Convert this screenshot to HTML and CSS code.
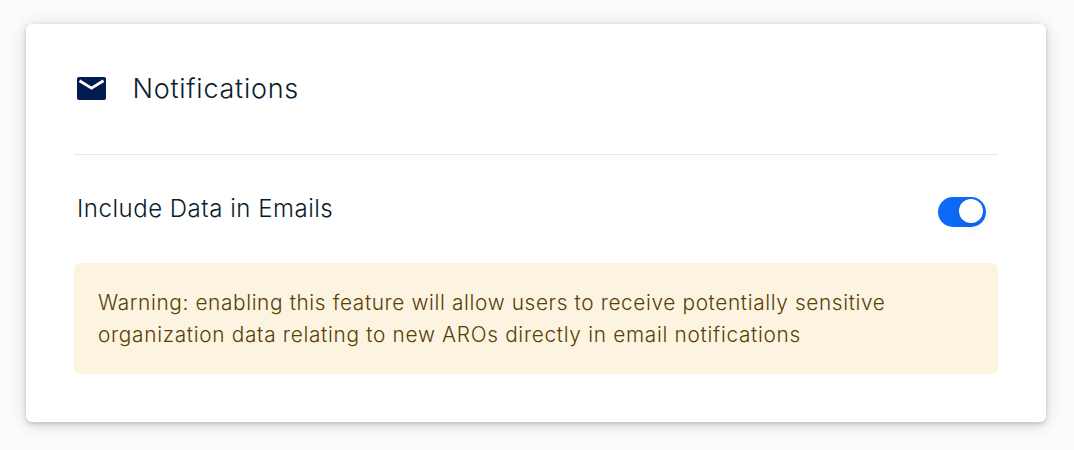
FILE: index.html
```html
<!DOCTYPE html>
<html lang="en">
<head>
    <meta charset="UTF-8">
    <meta name="viewport" content="width=device-width, initial-scale=1.0">
    <title>Notifications</title>
    <link rel="stylesheet" href="styles.css">
</head>
<body>

    <section class="card">
        <header class="card-header">
            <svg class="mail-icon" viewBox="0 0 29 23" aria-hidden="true">
                <rect width="29" height="23" rx="2"/>
                <path d="M2.5 3.7L14.5 11.2L26.5 3.7" fill="none" stroke="#fff" stroke-width="2.8"/>
            </svg>
            <h2>Notifications</h2>
        </header>

        <div class="setting-row">
            <label for="includeData">Include Data in Emails</label>
            <input type="checkbox" role="switch" class="switch" id="includeData" checked>
        </div>

        <p class="warning">Warning: enabling this feature will allow users to receive potentially sensitive <span class="warning-line">organization data relating to new AROs directly in email notifications</span></p>
    </section>

</body>
</html>
```

FILE: styles.css
```css
* { box-sizing: border-box; }

body {
    margin: 0;
    padding: 24px 28px 28px 26px;
    height: 450px;
    background-color: #fafbfd;
    color: #0b1c2c;
    font-family: Inter, "Liberation Sans", sans-serif;
    font-weight: 300;
    letter-spacing: 0.5px;
}

.card {
    height: 398px;
    padding: 0 48px;
    background-color: #fff;
    border-radius: 6px;
    box-shadow: 0 2px 4px rgba(0, 0, 0, 0.16), 0 2px 16px rgba(0, 0, 0, 0.16);
}

/* Header */
.card-header {
    display: flex;
    align-items: center;
    gap: 26.5px;
    height: 131px;
    padding: 0 0 2px 3px;
    border-bottom: 1px solid #e6e7e8;
}
.card-header h2 { margin: 0; font-size: 27px; font-weight: 300; letter-spacing: 0.74px; }
.mail-icon { width: 29px; height: 23px; fill: #001c50; }

/* Setting */
.setting-row {
    display: flex;
    justify-content: space-between;
    height: 108px;
    padding: 39px 12px 0 3px;
}
.setting-row label { font-size: 24px; line-height: 30px; letter-spacing: 0.52px; }

.switch {
    appearance: none;
    display: flex;
    justify-content: flex-end;
    width: 48px;
    height: 30px;
    margin: 3px 0 0;
    padding: 2px 3px;
    border-radius: 15px;
    background-color: #0d6af8;
}
.switch::before {
    content: "";
    width: 24px;
    height: 24px;
    border-radius: 50%;
    background-color: #fff;
    box-shadow: 0 4px 12px rgba(0, 0, 0, 0.1);
}

/* Warning */
.warning {
    margin: 0;
    padding: 24px 24px 23px;
    border-radius: 6px;
    background-color: #fcf4e0;
    color: #554005;
    font-size: 20.8px;
    line-height: 32px;
    letter-spacing: 0.63px;
}
.warning-line { letter-spacing: 0.7px; }
```
